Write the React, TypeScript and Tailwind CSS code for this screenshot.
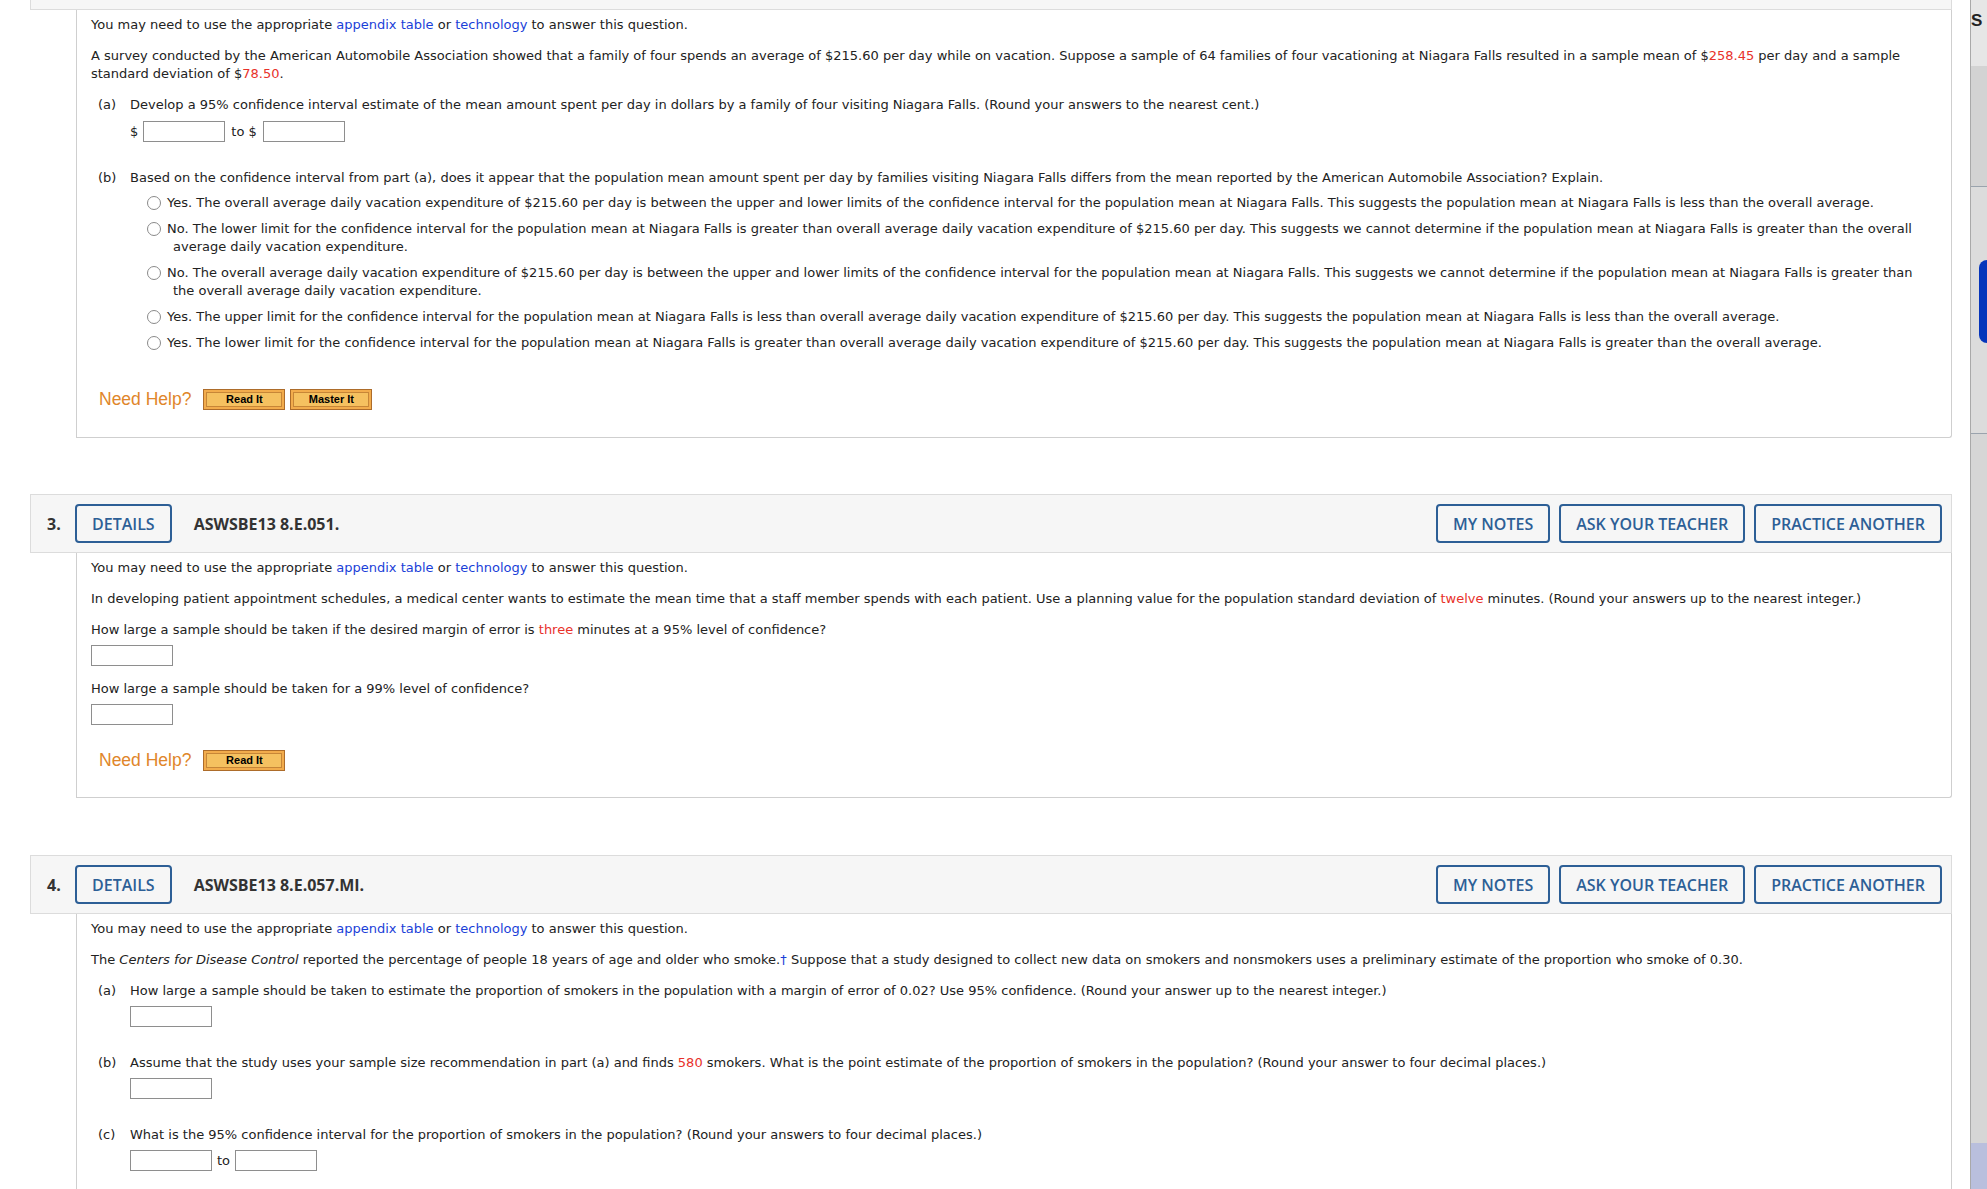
import type { ReactNode } from "react"

function Red({ children }: { children: ReactNode }) {
  return <span className="text-[#e8312b]">{children}</span>
}

function Lnk({ children }: { children: ReactNode }) {
  return <span className="text-[#1a3fd8]">{children}</span>
}

function Box() {
  return <span className="inline-block h-[21px] w-[82px] shrink-0 border border-[#8e8e8e] bg-white" />
}

function HeadBtn({ children }: { children: ReactNode }) {
  return (
    <span className="flex h-[39px] items-center rounded-[4px] border-2 border-[#2d5f96] px-[15px] text-[16px] font-semibold text-[#2d5f96]">
      {children}
    </span>
  )
}

function Header({ num, code, className = "" }: { num: string; code: string; className?: string }) {
  return (
    <div
      className={
        "flex h-[59px] items-center border border-[#dcdcdc] bg-[#f6f6f6] pl-[16px] pr-[9px] font-['Open_Sans',sans-serif] " +
        className
      }
    >
      <span className="w-[28px] text-[16px] font-bold text-[#333]">{num}</span>
      <HeadBtn>DETAILS</HeadBtn>
      <span className="ml-[22px] text-[16px] font-bold text-[#333]">{code}</span>
      <div className="ml-auto flex gap-[9px]">
        <HeadBtn>MY NOTES</HeadBtn>
        <HeadBtn>ASK YOUR TEACHER</HeadBtn>
        <HeadBtn>PRACTICE ANOTHER</HeadBtn>
      </div>
    </div>
  )
}

function HelpBtn({ children }: { children: ReactNode }) {
  return (
    <span className="flex h-[21px] w-[82px] border border-[#ad6c2a] bg-[#f2ac4c] p-[2px]">
      <span className="flex flex-1 items-center justify-center border border-[#c78637] bg-[#f5c160] font-['Liberation_Sans',Arial,sans-serif] text-[11px] font-bold leading-none text-black">
        {children}
      </span>
    </span>
  )
}

function NeedHelp({ master, className = "" }: { master?: boolean; className?: string }) {
  return (
    <div className={"ml-[8px] flex items-center " + className}>
      <span className="mr-[12px] font-['Liberation_Sans',Arial,sans-serif] text-[17.5px] leading-[21px] text-[#e0862a]">
        Need Help?
      </span>
      <div className="flex gap-[5px]">
        <HelpBtn>Read It</HelpBtn>
        {master && <HelpBtn>Master It</HelpBtn>}
      </div>
    </div>
  )
}

function Part({ label, children, className = "" }: { label: string; children: ReactNode; className?: string }) {
  return (
    <div className={"flex pl-[7px] " + className}>
      <span className="w-[32px] shrink-0">{label}</span>
      <div className="flex-1">{children}</div>
    </div>
  )
}

function Option({ children, first }: { children: ReactNode; first?: boolean }) {
  return (
    <div className={"ml-[17px] flex items-start " + (first ? "mt-[7px]" : "mt-[8px]")}>
      <span className="mt-[2px] h-[14px] w-[14px] shrink-0 rounded-full border border-[#8a8a8a] bg-white" />
      <div className="ml-[6px] pl-[6px] -indent-[6px]">{children}</div>
    </div>
  )
}

function Intro() {
  return (
    <p className="mb-[13px]">
      You may need to use the appropriate <Lnk>appendix table</Lnk> or <Lnk>technology</Lnk> to answer this question.
    </p>
  )
}

const card = "ml-[46px] border-x border-b border-[#cfcfcf] rounded-br-[3px] bg-white px-[14px] pt-[6px]"

export default function App() {
  return (
    <div className="flex h-[1189px] overflow-hidden bg-white font-['DejaVu_Sans',Verdana,sans-serif] text-[13px] leading-[18px] text-[#222]">
      <main className="flex-1 pl-[30px] pr-[18px]">
        {/* question 2, scrolled so only the bottom of its header shows */}
        <Header num="2." code="ASWSBE13 8.E.047." className="-mt-[49px]" />
        <div className={card + " pb-[27px]"}>
          <Intro />
          <p className="mb-[13px]">
            A survey conducted by the American Automobile Association showed that a family of four spends an average of
            $215.60 per day while on vacation. Suppose a sample of 64 families of four vacationing at Niagara Falls
            resulted in a sample mean of $<Red>258.45</Red> per day and a sample standard deviation of $<Red>78.50</Red>.
          </p>
          <Part label="(a)">
            <p>
              Develop a 95% confidence interval estimate of the mean amount spent per day in dollars by a family of four
              visiting Niagara Falls. (Round your answers to the nearest cent.)
            </p>
            <div className="mt-[7px] flex items-center">
              <span className="mr-[5px]">$</span>
              <Box />
              <span className="mx-[6px]">to $</span>
              <Box />
            </div>
          </Part>
          <Part label="(b)" className="mt-[27px]">
            <p>
              Based on the confidence interval from part (a), does it appear that the population mean amount spent per day
              by families visiting Niagara Falls differs from the mean reported by the American Automobile Association?
              Explain.
            </p>
            <Option first>
              Yes. The overall average daily vacation expenditure of $215.60 per day is between the upper and lower limits
              of the confidence interval for the population mean at Niagara Falls. This suggests the population mean at
              Niagara Falls is less than the overall average.
            </Option>
            <Option>
              No. The lower limit for the confidence interval for the population mean at Niagara Falls is greater than
              overall average daily vacation expenditure of $215.60 per day. This suggests we cannot determine if the
              population mean at Niagara Falls is greater than the overall average daily vacation expenditure.
            </Option>
            <Option>
              No. The overall average daily vacation expenditure of $215.60 per day is between the upper and lower limits of
              the confidence interval for the population mean at Niagara Falls. This suggests we cannot determine if the
              population mean at Niagara Falls is greater than the overall average daily vacation expenditure.
            </Option>
            <Option>
              Yes. The upper limit for the confidence interval for the population mean at Niagara Falls is less than overall
              average daily vacation expenditure of $215.60 per day. This suggests the population mean at Niagara Falls is
              less than the overall average.
            </Option>
            <Option>
              Yes. The lower limit for the confidence interval for the population mean at Niagara Falls is greater than
              overall average daily vacation expenditure of $215.60 per day. This suggests the population mean at Niagara
              Falls is greater than the overall average.
            </Option>
          </Part>
          <NeedHelp master className="mt-[37px]" />
        </div>

        {/* question 3 */}
        <Header num="3." code="ASWSBE13 8.E.051." className="mt-[56px]" />
        <div className={card + " pb-[26px]"}>
          <Intro />
          <p className="mb-[13px]">
            In developing patient appointment schedules, a medical center wants to estimate the mean time that a staff
            member spends with each patient. Use a planning value for the population standard deviation of{" "}
            <Red>twelve</Red> minutes. (Round your answers up to the nearest integer.)
          </p>
          <p>
            How large a sample should be taken if the desired margin of error is <Red>three</Red> minutes at a 95% level of
            confidence?
          </p>
          <div className="mt-[6px] flex">
            <Box />
          </div>
          <p className="mt-[14px]">How large a sample should be taken for a 99% level of confidence?</p>
          <div className="mt-[6px] flex">
            <Box />
          </div>
          <NeedHelp className="mt-[25px]" />
        </div>

        {/* question 4 */}
        <Header num="4." code="ASWSBE13 8.E.057.MI." className="mt-[57px]" />
        <div className={card + " pb-[60px]"}>
          <Intro />
          <p className="mb-[13px]">
            The <i>Centers for Disease Control</i> reported the percentage of people 18 years of age and older who smoke.
            <Lnk>†</Lnk> Suppose that a study designed to collect new data on smokers and nonsmokers uses a preliminary
            estimate of the proportion who smoke of 0.30.
          </p>
          <Part label="(a)">
            <p>
              How large a sample should be taken to estimate the proportion of smokers in the population with a margin of
              error of 0.02? Use 95% confidence. (Round your answer up to the nearest integer.)
            </p>
            <div className="mt-[6px] flex">
              <Box />
            </div>
          </Part>
          <Part label="(b)" className="mt-[27px]">
            <p>
              Assume that the study uses your sample size recommendation in part (a) and finds <Red>580</Red> smokers. What
              is the point estimate of the proportion of smokers in the population? (Round your answer to four decimal
              places.)
            </p>
            <div className="mt-[6px] flex">
              <Box />
            </div>
          </Part>
          <Part label="(c)" className="mt-[27px]">
            <p>
              What is the 95% confidence interval for the proportion of smokers in the population? (Round your answers to
              four decimal places.)
            </p>
            <div className="mt-[6px] flex items-center">
              <Box />
              <span className="mx-[5px]">to</span>
              <Box />
            </div>
          </Part>
        </div>
      </main>

      {/* side strip of the neighbouring panel */}
      <aside className="flex w-[17px] shrink-0 flex-col border-l border-[#a9a9a9] bg-[#d8d8d8]">
        <div className="h-[66px] overflow-hidden bg-[#e6e6e6] pt-[12px] font-['Liberation_Sans',Arial,sans-serif] text-[17px] font-bold leading-none text-[#222]">
          S
        </div>
        <div className="h-[121px] border-b border-[#9aa3ad] bg-[#d3d3d3]" />
        <div className="h-[247px] border-b border-[#9aa3ad] bg-[#dcdcdc] pl-[8px] pt-[73px]">
          <div className="h-[83px] rounded-l-[10px] bg-[#0535bb]" />
        </div>
        <div className="flex-1 bg-[#d6d6d6]" />
        <div className="h-[46px] bg-[#b9bfdd]" />
      </aside>
    </div>
  )
}
